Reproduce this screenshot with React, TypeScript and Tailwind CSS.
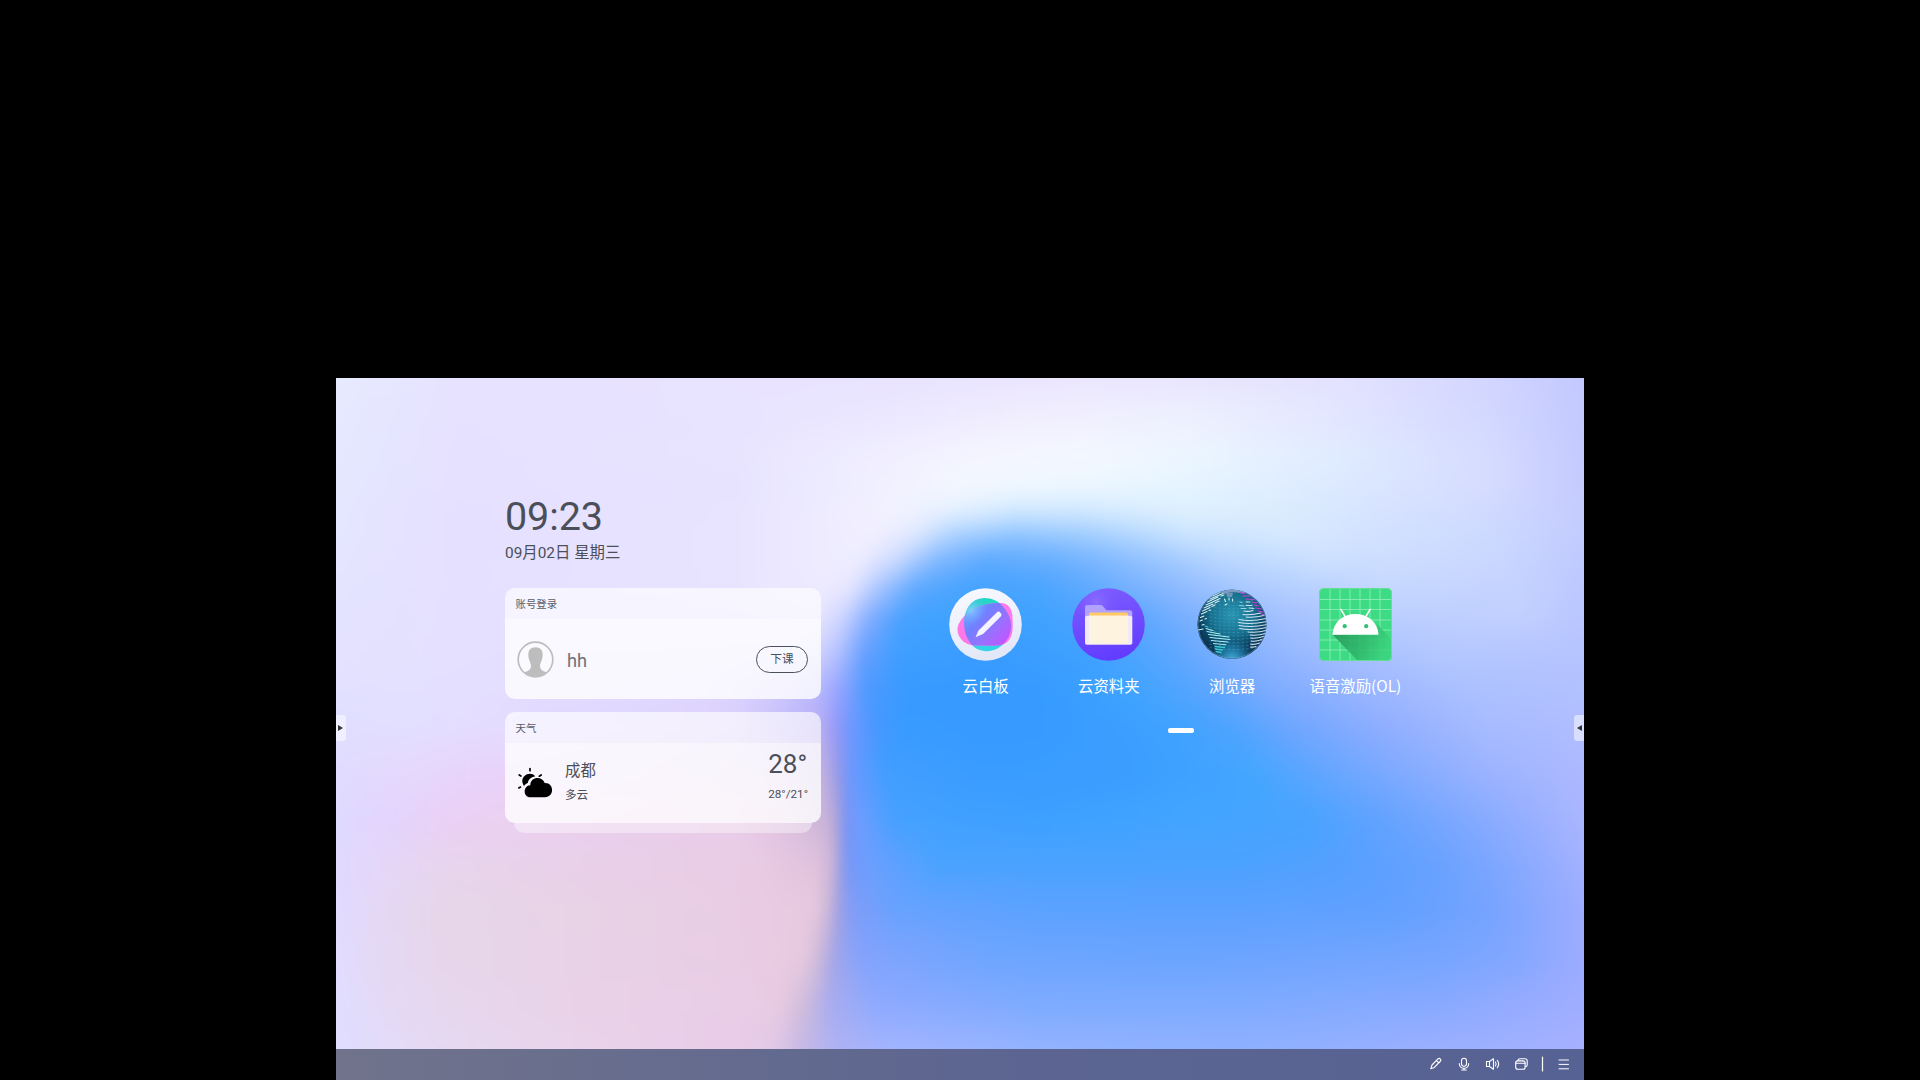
import React from "react";

type Stop = [number, string];

const WIDTH = 1248;

/* Colour rows of the wallpaper; neighbouring rows are blended vertically. */
const meshRows: { y: number; stops: Stop[] }[] = [
  { y: 0, stops: [[0, "#e8ebff"], [120, "#e6e2ff"], [400, "#e9e3ff"], [650, "#eae4ff"], [750, "#ebe6fe"], [1000, "#e4e2ff"], [1150, "#d3d6ff"], [1248, "#c3c8ff"]] },
  { y: 35, stops: [[0, "#e6e9ff"], [120, "#e6e2ff"], [400, "#e8e3ff"], [550, "#ebe7ff"], [700, "#f1eefe"], [850, "#eef0fe"], [1000, "#e3e6ff"], [1150, "#d3d8ff"], [1248, "#c3c9ff"]] },
  { y: 80, stops: [[0, "#e5e8ff"], [120, "#e6e1ff"], [400, "#e8e4ff"], [520, "#efedff"], [640, "#f5f5ff"], [750, "#f4f8ff"], [870, "#eaf5ff"], [1000, "#e0ecff"], [1150, "#d6dcff"], [1248, "#c4caff"]] },
  { y: 110, stops: [[0, "#e5e7ff"], [120, "#e6e1ff"], [400, "#e7e3ff"], [484, "#ecebff"], [560, "#f2f1ff"], [620, "#f3f7ff"], [700, "#eef8ff"], [850, "#e5f4ff"], [1000, "#dce9ff"], [1150, "#d6dcff"], [1248, "#c5caff"]] },
  { y: 135, stops: [[0, "#e5e6ff"], [120, "#e5e0ff"], [400, "#e8e4ff"], [484, "#eeebff"], [560, "#f3f2ff"], [620, "#e3f0ff"], [680, "#cfe7ff"], [740, "#cfe7ff"], [850, "#ddf0fe"], [950, "#daecfe"], [1050, "#d6e2ff"], [1150, "#d0daff"], [1248, "#c4ccff"]] },
  { y: 157, stops: [[0, "#e5e6ff"], [120, "#e5e0ff"], [400, "#e8e4ff"], [484, "#eeebff"], [540, "#f1efff"], [580, "#dfe8ff"], [620, "#a9d0ff"], [680, "#8dc3ff"], [750, "#9fccff"], [850, "#cbe4ff"], [950, "#d6e9ff"], [1050, "#d2e1ff"], [1150, "#cddaff"], [1248, "#c3ccff"]] },
  { y: 182, stops: [[0, "#e5e5ff"], [120, "#e5e0ff"], [400, "#e8e4ff"], [484, "#eeebff"], [525, "#eeedff"], [560, "#cedbff"], [600, "#82b8ff"], [650, "#5ba8ff"], [720, "#68aeff"], [800, "#8ebfff"], [880, "#b6d5ff"], [980, "#cde1ff"], [1150, "#cbd8ff"], [1248, "#bfc9ff"]] },
  { y: 210, stops: [[0, "#e4e4ff"], [120, "#e5e0ff"], [400, "#e8e4ff"], [490, "#eeebff"], [515, "#e6e6ff"], [545, "#a5c3ff"], [580, "#5ca7ff"], [630, "#45a3ff"], [700, "#49a5ff"], [760, "#63aaff"], [820, "#84b5ff"], [920, "#aecbff"], [1050, "#c6d8ff"], [1180, "#c4d3ff"], [1248, "#bcc8ff"]] },
  { y: 240, stops: [[0, "#e4e3ff"], [120, "#e5e0ff"], [400, "#e6e2ff"], [480, "#e8e6ff"], [505, "#cfd5ff"], [535, "#7fabff"], [565, "#47a0ff"], [600, "#3fa3ff"], [700, "#3fa2ff"], [790, "#52a5ff"], [850, "#79afff"], [950, "#a3c1ff"], [1060, "#bbceff"], [1180, "#c2d0ff"], [1248, "#b9c6ff"]] },
  { y: 275, stops: [[0, "#e4e2ff"], [120, "#e5e0ff"], [400, "#e3deff"], [470, "#dcdaff"], [500, "#b8c3ff"], [528, "#679fff"], [560, "#409fff"], [650, "#389bff"], [760, "#40a2ff"], [840, "#5ea7ff"], [900, "#83b0ff"], [1000, "#a3beff"], [1100, "#b4c8ff"], [1248, "#b6c4ff"]] },
  { y: 310, stops: [[0, "#e3e1ff"], [120, "#e5dfff"], [370, "#dfd7ff"], [440, "#cecaff"], [480, "#b9b9ff"], [503, "#94a4ff"], [530, "#4f9aff"], [570, "#389aff"], [700, "#369aff"], [800, "#40a4ff"], [870, "#5ba5ff"], [930, "#7dabff"], [1030, "#9ab6ff"], [1130, "#acc1ff"], [1248, "#b2c1ff"]] },
  { y: 350, stops: [[0, "#e0deff"], [80, "#e2dfff"], [160, "#e4dcff"], [400, "#dcd0fc"], [484, "#b8acf4"], [502, "#8f97f7"], [515, "#6e98ff"], [540, "#4798ff"], [565, "#399bff"], [700, "#369aff"], [840, "#40a2ff"], [900, "#4ea4ff"], [960, "#70a6ff"], [1050, "#90aeff"], [1150, "#a7bbff"], [1248, "#b0bdff"]] },
  { y: 395, stops: [[0, "#e1dcff"], [80, "#e6d8fd"], [140, "#e9d3fb"], [300, "#e7d0f3"], [440, "#dcc5ea"], [488, "#bfb0e1"], [503, "#9398e8"], [515, "#6c98ff"], [548, "#429eff"], [650, "#3a9cff"], [800, "#3b9eff"], [920, "#44a6ff"], [980, "#5fa5ff"], [1050, "#7ba9ff"], [1150, "#9bb3ff"], [1248, "#adb9ff"]] },
  { y: 440, stops: [[0, "#dfdaff"], [50, "#e3d4fd"], [110, "#ead0f6"], [170, "#ebd0f1"], [400, "#e9cce8"], [450, "#dec1e0"], [490, "#c9b3d8"], [502, "#aaa2da"], [509, "#7b94f5"], [525, "#6b9dff"], [560, "#44a1ff"], [700, "#3da0ff"], [850, "#42a5ff"], [970, "#46a4ff"], [1040, "#60a2ff"], [1120, "#7da8ff"], [1200, "#9ab0ff"], [1248, "#aab6ff"]] },
  { y: 485, stops: [[0, "#e0daff"], [50, "#e5d6f8"], [120, "#e8d4ec"], [300, "#e9cfe8"], [420, "#e9cbe4"], [480, "#e0c2dc"], [496, "#cdb5d8"], [504, "#9e9fdf"], [512, "#7797f8"], [535, "#6b9fff"], [600, "#4aa3ff"], [700, "#4aa2ff"], [900, "#4ba2ff"], [1000, "#54a0ff"], [1100, "#68a1ff"], [1180, "#86a9ff"], [1248, "#a3b1ff"]] },
  { y: 530, stops: [[0, "#e1dbff"], [40, "#e4d8f6"], [100, "#e7d6ea"], [250, "#e8d2e6"], [420, "#e9cce4"], [478, "#e7c9df"], [492, "#cdb8d8"], [502, "#a3a2e2"], [516, "#809cf7"], [560, "#67a2ff"], [700, "#5ba2ff"], [900, "#5ba1ff"], [1050, "#60a0ff"], [1150, "#74a3ff"], [1248, "#9dadff"]] },
  { y: 580, stops: [[0, "#e2dcff"], [40, "#e4d9f5"], [100, "#e7d6eb"], [250, "#e8d2e7"], [420, "#e9cce4"], [465, "#e8cadf"], [483, "#cdb9d9"], [498, "#a3a5e8"], [525, "#84a3fc"], [650, "#6ea6ff"], [850, "#6aa4ff"], [1100, "#75a5ff"], [1180, "#82a7ff"], [1248, "#9cacff"]] },
  { y: 625, stops: [[0, "#e1ddff"], [50, "#e4daf6"], [110, "#e7d7ed"], [250, "#e9d2e8"], [400, "#e9cde7"], [445, "#e8cae1"], [470, "#cdbbdc"], [493, "#aaacee"], [540, "#8da9ff"], [700, "#7cabff"], [900, "#7dabff"], [1100, "#87a9ff"], [1248, "#a0adff"]] },
  { y: 671, stops: [[0, "#e0ddff"], [60, "#e3dbf8"], [120, "#e6d8f0"], [250, "#e9d3ea"], [400, "#e9cce8"], [435, "#e3c9e6"], [465, "#c6b9e5"], [500, "#aeb2f4"], [560, "#a2b5ff"], [700, "#94b3ff"], [900, "#90b0ff"], [1100, "#9bb0ff"], [1248, "#a6b1ff"]] },
];

function Wallpaper() {
  return (
    <svg className="absolute inset-0 h-full w-full" viewBox="0 0 1248 702" preserveAspectRatio="none" aria-hidden="true">
      <defs>
        <filter id="soften" filterUnits="userSpaceOnUse" x="-20" y="-20" width="1288" height="742" colorInterpolationFilters="sRGB">
          <feGaussianBlur stdDeviation="4 10" />
        </filter>
        {meshRows.map((row, i) => (
          <React.Fragment key={row.y}>
            <linearGradient id={`row${i}`} gradientUnits="userSpaceOnUse" x1="0" y1="0" x2={WIDTH} y2="0">
              {row.stops.map(([x, color]) => (
                <stop key={x} offset={x / WIDTH} stopColor={color} />
              ))}
            </linearGradient>
            {i > 0 && (
              <>
                <linearGradient id={`ramp${i}`} gradientUnits="userSpaceOnUse" x1="0" y1={meshRows[i - 1].y} x2="0" y2={row.y}>
                  <stop offset="0" stopColor="#fff" stopOpacity="0" />
                  <stop offset="1" stopColor="#fff" />
                </linearGradient>
                <mask id={`fade${i}`} maskUnits="userSpaceOnUse" x="-30" y="-30" width="1310" height="790">
                  <rect x="-30" y={meshRows[i - 1].y} width="1310" height="790" fill={`url(#ramp${i})`} />
                </mask>
              </>
            )}
          </React.Fragment>
        ))}
      </defs>
      <g filter="url(#soften)">
        {meshRows.map((row, i) => (
          <rect key={row.y} x="-30" y="-30" width="1310" height="780" fill={`url(#row${i})`} mask={i > 0 ? `url(#fade${i})` : undefined} />
        ))}
      </g>
    </svg>
  );
}

function WhiteboardIcon() {
  return (
    <svg viewBox="0 0 73 73" className="h-[73px] w-[73px]">
      <defs>
        <linearGradient id="wbDisc" x1="0" y1="0" x2="0.3" y2="1">
          <stop offset="0" stopColor="#fafaff" />
          <stop offset="1" stopColor="#e3e8f8" />
        </linearGradient>
        <linearGradient id="wbTeal" x1="0" y1="0" x2="0" y2="1">
          <stop offset="0" stopColor="#22d8c2" />
          <stop offset="1" stopColor="#35d3e8" />
        </linearGradient>
        <linearGradient id="wbPurple" x1="0" y1="0.1" x2="1" y2="0.8">
          <stop offset="0.1" stopColor="#5fb0ff" />
          <stop offset="0.4" stopColor="#7080ff" />
          <stop offset="0.7" stopColor="#9a70ff" />
          <stop offset="1" stopColor="#c553ff" />
        </linearGradient>
        <radialGradient id="wbGlow" cx="0.3" cy="0.3" r="0.22">
          <stop offset="0" stopColor="#8fd0ff" stopOpacity="0.8" />
          <stop offset="1" stopColor="#6fa8ff" stopOpacity="0" />
        </radialGradient>
        <clipPath id="wbClip">
          <path d="M35 10 C45 10 51 14 56 21 C64 31 64 44 57 53 C51 61 43 64 35 63 C25 62 19 54 16 44 C13 30 17 11 35 10 Z" />
        </clipPath>
      </defs>
      <circle cx="36.5" cy="36.5" r="36.3" fill="url(#wbDisc)" />
      <path d="M35 10 C45 10 51 14 56 21 C64 31 64 44 57 53 C51 61 43 64 35 63 C25 62 19 54 16 44 C13 30 17 11 35 10 Z" fill="url(#wbTeal)" />
      <path d="M50 15 C59 14 64 21 63.5 31 C64.5 45 63 57 48 57.5 L28 57.5 C14 58 6.5 47 9 38 C12 29 25 15 50 15 Z" fill="#ff78e8" />
      <path clipPath="url(#wbClip)" d="M50 15 C59 14 64 21 63.5 31 C64.5 45 63 57 48 57.5 L28 57.5 C14 58 6.5 47 9 38 C12 29 25 15 50 15 Z" fill="url(#wbPurple)" />
      <circle cx="36.5" cy="36.5" r="36.3" fill="url(#wbGlow)" clipPath="url(#wbClip)" />
      <path d="M48 24.3 Q49.5 22.9 51 24.3 L52 25.5 Q53.3 27 51.8 28.4 L34 46 L26.5 49.3 L29.5 42.5 Z" fill="#f5f3ff" />
    </svg>
  );
}

function FolderIcon() {
  return (
    <svg viewBox="0 0 73 73" className="h-[73px] w-[73px]">
      <defs>
        <linearGradient id="fdDisc" x1="0.3" y1="0" x2="0.5" y2="1">
          <stop offset="0" stopColor="#7c5cff" />
          <stop offset="0.5" stopColor="#6f4bff" />
          <stop offset="1" stopColor="#623cff" />
        </linearGradient>
        <radialGradient id="fdGlow" cx="0.33" cy="0.2" r="0.3">
          <stop offset="0" stopColor="#8f74ff" stopOpacity="0.8" />
          <stop offset="1" stopColor="#7c5cff" stopOpacity="0" />
        </radialGradient>
      </defs>
      <circle cx="36.5" cy="36.5" r="36.3" fill="url(#fdDisc)" />
      <circle cx="36.5" cy="36.5" r="36.3" fill="url(#fdGlow)" />
      <path d="M13 19 Q13 17 15 17 L28 17 Q30 17 31 18.3 L34.5 22.3 L58 22.3 Q60.3 22.3 60.3 24.5 L60.3 30 L13 30 Z" fill="#b3a2fb" />
      <path d="M17 30 L17 26.5 Q17 24.5 19 24.5 L54 24.5 Q56 24.5 56 26.5 L56 30 Z" fill="#ffc966" />
      <rect x="13" y="27.7" width="47.3" height="29" rx="1.8" fill="#f1e9f4" />
      <rect x="17" y="27.7" width="39" height="28" fill="#fdf3df" />
    </svg>
  );
}

const dotRows = Array.from({ length: 15 }, (_, i) => 12 + i * 3.4);

function GlobeIcon() {
  return (
    <svg viewBox="0 0 73 73" className="h-[73px] w-[73px]">
      <defs>
        <radialGradient id="gl" cx="0.5" cy="0.36" r="0.6">
          <stop offset="0" stopColor="#2a95b2" />
          <stop offset="0.5" stopColor="#18718f" />
          <stop offset="0.8" stopColor="#0b4161" />
          <stop offset="1" stopColor="#0c304d" />
        </radialGradient>
        <radialGradient id="glFoot" cx="0.5" cy="1.02" r="0.36">
          <stop offset="0" stopColor="#46b8e6" />
          <stop offset="0.5" stopColor="#2387b4" stopOpacity="0.7" />
          <stop offset="1" stopColor="#14537a" stopOpacity="0" />
        </radialGradient>
        <clipPath id="glDisc"><circle cx="36" cy="36.2" r="34.6" /></clipPath>
      </defs>
      <circle cx="36" cy="36.2" r="34.6" fill="url(#gl)" />
      <g clipPath="url(#glDisc)" fill="none" strokeLinecap="round">
        <circle cx="36" cy="36.2" r="34.6" fill="url(#glFoot)" />
        <g stroke="#4aabc8" strokeWidth="0.7" strokeDasharray="1.6 3" opacity="0.7">
          {dotRows.map((y) => (
            <path key={y} d={`M14 ${y} Q36 ${y + 4} 60 ${y}`} />
          ))}
        </g>
        <path d="M24 4 Q36 -1 50 4 L46 5.5 Q36 3 28 6 Z" fill="#9aa6cf" opacity="0.8" />
        <path d="M30 5 H37 L36 9 H31 Z" fill="#7f9cc0" opacity="0.8" />
        <path stroke="#d5edf2" strokeWidth="1.1" d="M17 8 L24 4.5 M14 11 L27 5.5 M11.5 14 L22 9 M25 8 L28 7 M10 17 L24 10.5 M8 20 L17 16 M19 15 L23 13 M6.5 23 L14 19.5 M16 18.5 L19 17 M5.5 26 L11 23.5 M13 22.5 L14.5 22 M4.500 29.5 L8 28 M4 33 L6.5 32 M9 31 L10.5 30.5 M6 37 L8 36.5 M28.5 11 L29.5 13.5 M33 10 V12 M36.5 11 V13 M29 17 L31 16 M2.5 42 L7 41" />
        <path stroke="#a5eef0" strokeWidth="1.1" d="M10 40.5 L17 42.5 M11 43.5 L24 46 M12.5 46.5 L33 49 M14 49.5 L34 51.5 M15.5 52.5 L32 54 M17.5 55.5 L30 56.8" />
        <path stroke="#3cc8d2" strokeWidth="1.3" d="M9 38 L12 39 M19 58.5 L28.5 59.5 M19.5 61 L26.5 62 M20 63.5 L25 64.5" />
        <path stroke="#d3e6f2" strokeWidth="1.1" d="M48 23 Q52 24 57 22.5 M47 26.5 Q55 27.5 65 25 M50 29 Q58 30 68 27.5 M43 31.5 Q55 34 70 30.5 M42.5 34.5 Q55 37 71 33.5 M43 37.5 Q56 40 71 36.5 M43.5 40.5 Q56 43 70.5 39.5 M52 44 Q62 45 70 42.5 M54 47 Q62 48 69 45.5 M54.5 50 Q60 51 67.5 48.5 M55 53 Q60 54 66 51.5 M54.5 56 Q58 57 63.5 55 M54.5 59 Q57 59.5 60 58.5" />
        <path stroke="#8fd4e4" strokeWidth="1" d="M44 14 L46 14.5 M43.5 17.5 L48 18 M45 20.5 L50 20.5" />
        <path stroke="#c544dc" strokeWidth="1.1" d="M44 4.5 L49 5.5 M47 8 L54 8 M50 11 L58 11.5 M56 14 L61 15 M58 17 L63 18 M60 20 L65 21 M62 23 L67 24 M66 26 L68 27" />
        <path stroke="#cfe0f0" strokeWidth="1" d="M50 14 L54 14 M50 17.5 L56 17.5 M53 20 L58 20.5" />
        <circle cx="36" cy="36.2" r="34" stroke="#7fa4c4" strokeWidth="0.8" opacity="0.6" />
      </g>
    </svg>
  );
}

const gridX = [11, 21, 31, 41, 51, 61];
const gridY = [11.5, 21.5, 32, 42, 52, 62];

function AndroidIcon() {
  return (
    <svg viewBox="0 0 73 73" className="h-[73px] w-[73px]">
      <defs>
        <linearGradient id="anShade" gradientUnits="userSpaceOnUse" x1="20" y1="45" x2="66" y2="66">
          <stop offset="0" stopColor="#27995a" />
          <stop offset="0.55" stopColor="#2fb76b" />
          <stop offset="1" stopColor="#3bd47f" />
        </linearGradient>
        <clipPath id="anBox"><rect width="73" height="73" rx="5" /></clipPath>
      </defs>
      <g clipPath="url(#anBox)">
        <rect width="73" height="73" fill="#3ddc84" />
        <g stroke="#a5f0c8" strokeWidth="0.9" opacity="0.75">
          {gridX.map((x) => <path key={x} d={`M${x} 0 V73`} />)}
          {gridY.map((y) => <path key={y} d={`M0 ${y} H73`} />)}
        </g>
        <path d="M13.5 46.5 L59 46.5 L58 36 L73 52 L73 73 L39 73 Z" fill="url(#anShade)" opacity="0.85" />
        <rect x="0.5" y="0.5" width="72" height="72" rx="4.5" fill="none" stroke="#66dd99" strokeWidth="1" />
        <path d="M13.3 46.7 C14.5 34 24 26 36.4 26 C49 26 58.5 34 59.6 46.7 Z" fill="#fff" />
        <path d="M22 21.5 L27 30 M51 21.5 L46 30" stroke="#fff" strokeWidth="1.5" strokeLinecap="round" />
        <circle cx="25.7" cy="38.2" r="2.1" fill="#36bf76" />
        <circle cx="47.2" cy="38.2" r="2.1" fill="#36bf76" />
      </g>
    </svg>
  );
}

const apps = [
  { name: "云白板", Icon: WhiteboardIcon },
  { name: "云资料夹", Icon: FolderIcon },
  { name: "浏览器", Icon: GlobeIcon },
  { name: "语音激励(OL)", Icon: AndroidIcon },
];

function Card({ title, children }: { title: string; children: React.ReactNode }) {
  return (
    <section className="flex h-[111px] w-[316px] flex-col overflow-hidden rounded-[10px]">
      <header className="flex h-[31px] items-center bg-white/65 pl-[10.5px] pt-[2px] text-[10.4px] text-[#5a5c66]">{title}</header>
      <div className="flex flex-1 items-center bg-white/80">{children}</div>
    </section>
  );
}

function Avatar() {
  return (
    <svg viewBox="0 0 37 37" className="h-[37px] w-[37px]">
      <defs><clipPath id="av"><circle cx="18.5" cy="18.5" r="17" /></clipPath></defs>
      <circle cx="18.5" cy="18.5" r="17.3" fill="#fbfaff" stroke="#bdbdbd" strokeWidth="1.7" />
      <g clipPath="url(#av)" fill="#bdbdbd">
        <path d="M18.5 6.3 C23.5 6.3 25.8 9.5 25.7 14 C25.6 19 23.5 21.3 23.2 23.5 C22.5 27 24 30.5 31 31.5 L31 37 L6 37 L6 31.5 C13 30.5 14.5 27 13.8 23.5 C13.5 21.3 11.4 19 11.3 14 C11.2 9.5 13.5 6.3 18.5 6.3 Z" />
      </g>
    </svg>
  );
}

function CloudyIcon() {
  return (
    <svg viewBox="0 0 36 31" className="h-[31px] w-[36px]">
      <path d="M13 1.5 V3.7 M2.2 8 L3.9 9 M24.2 8 L22.3 9.2 M1.8 20.9 L3.5 20.1" stroke="#000" strokeWidth="1.7" strokeLinecap="round" />
      <path d="M7 19 C4.5 15 4.8 11.5 7.5 9 C10.5 6 15.5 6 18.3 9.3 C13.5 10.2 11.3 13 10.8 16 C9 16.7 8 17.7 7 19 Z" fill="#000" />
      <path d="M13.5 30.2 C5.5 30.2 6 18.5 13.3 18.3 C13.5 9.5 25 8.8 27.7 16 C37.5 15.5 37.5 30.2 28 30.2 Z" fill="#000" />
    </svg>
  );
}

function Taskbar() {
  return (
    <footer className="relative flex h-[31px] items-center justify-end bg-linear-to-r from-[#70738b] via-[#5c6591] via-55% to-[#566294] pb-px pr-[14px]">
      <svg viewBox="0 0 148 20" className="h-5 w-[148px]" fill="none" stroke="#fff" strokeWidth="1.1" strokeLinecap="round" strokeLinejoin="round">
        <path d="M8.8 14.7 L10 11 L16.2 4.7 Q17.2 3.9 18.2 4.8 Q19.5 6 18.6 7 L12.3 13.4 Z M14.5 6.6 L16.9 8.9" />
        <rect x="39.5" y="4.2" width="5" height="8" rx="2.5" />
        <path d="M37.3 9.5 C37.3 15.8 46.7 15.8 46.7 9.5 M42 14.2 V16 M39.7 16 H44.3" />
        <path d="M64.5 7.5 H67.5 L71.5 4.8 V15.2 L67.5 12.5 H64.5 Z M67.5 7.5 V12.5 M73.5 8 Q74.8 10 73.5 12 M75.3 6.3 Q78 10 75.3 13.7" />
        <rect x="93.7" y="6.9" width="9.4" height="8.4" rx="2" />
        <path d="M93.7 9.2 H103 M95.8 6.7 Q96 4.7 98 4.7 H103 Q105.2 4.7 105.2 6.7 V10.7 Q105.2 12.4 103.6 12.8" />
        <path d="M120.5 3 V17" strokeWidth="1.2" />
        <path d="M137 6 H146.5 M137 10.4 H146.5 M137 14.8 H146.5" strokeWidth="1" />
      </svg>
    </footer>
  );
}

export default function App() {
  return (
    <main className="flex h-[1080px] w-[1920px] flex-col items-center justify-end overflow-hidden bg-black font-['Roboto','Noto_Sans_CJK_SC',sans-serif]">
      <div className="relative flex h-[702px] w-[1248px] flex-col overflow-hidden">
        <Wallpaper />
        <div className="relative flex flex-1 pl-[169px]">
          <div className="flex w-[316px] flex-col pt-[116px] text-[#4b4f59]">
            <time className="h-[46px] text-[39.5px] leading-[46px] tracking-[-0.1px]">09:23</time>
            <p className="h-[26px] text-[15.4px] leading-[26px]">09月02日 星期三</p>
            <div className="mt-[22px] flex flex-col gap-[13px]">
              <Card title="账号登录">
                <div className="ml-3 flex flex-1 items-center">
                  <Avatar />
                  <span className="ml-[13px] pt-[3px] text-[18.2px] text-[#6f7078]">hh</span>
                </div>
                <button className="mr-[13px] flex h-[27px] w-[52px] items-center justify-center rounded-full border-[1.5px] border-[#4b505c] pt-px text-[11.7px]">下课</button>
              </Card>
              <div>
                <Card title="天气">
                  <div className="mb-px ml-[11.5px] mr-[0.5px]"><CloudyIcon /></div>
                  <div className="ml-3 flex-1">
                    <div className="text-[15.4px] leading-6">成都</div>
                    <div className="text-[11.6px] leading-6">多云</div>
                  </div>
                  <div className="mb-[11px] mr-[13px]">
                    <div className="text-[26px] leading-[34px]">28°</div>
                    <div className="text-[11.7px] leading-[27px]">28°/21°</div>
                  </div>
                </Card>
                <div className="mx-[9px] h-[10px] rounded-b-[10px] bg-white/40" />
              </div>
            </div>
          </div>
          <div className="ml-[103px] flex w-[493px] flex-col items-center pt-[210px]">
            <div className="grid w-full grid-cols-4">
              {apps.map(({ name, Icon }) => (
                <div key={name} className="flex flex-col items-center">
                  <Icon />
                  <span className="mt-[12px] whitespace-nowrap font-['Noto_Sans_CJK_SC',sans-serif] text-[15.4px] leading-6 text-white">{name}</span>
                </div>
              ))}
            </div>
            <div className="ml-[21px] mt-[31px] h-[5px] w-[26px] rounded-[2px] bg-white" />
          </div>
        </div>
        <div className="absolute left-0 top-[337px] flex h-[26px] w-[10px] items-center rounded-r-[3px] bg-white/50 pl-[2px]">
          <svg viewBox="0 0 5 6" className="h-[6px] w-[5px]"><path d="M0 0 L5 3 L0 6 Z" fill="#333" /></svg>
        </div>
        <div className="absolute right-0 top-[337px] flex h-[26px] w-[10px] items-center rounded-l-[3px] bg-white/50 pl-[3px]">
          <svg viewBox="0 0 5 6" className="h-[6px] w-[5px]"><path d="M5 0 L0 3 L5 6 Z" fill="#333" /></svg>
        </div>
        <Taskbar />
      </div>
    </main>
  );
}
